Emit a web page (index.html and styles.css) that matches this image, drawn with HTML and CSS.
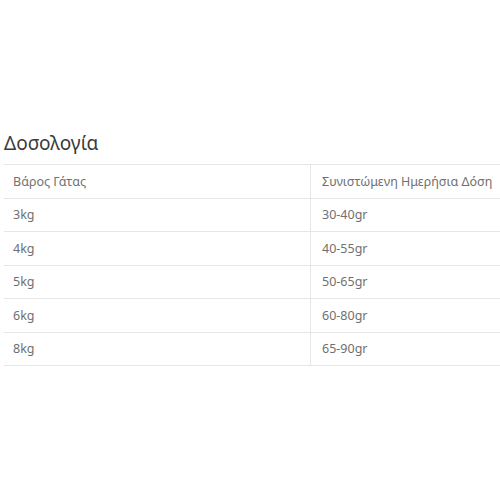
FILE: index.html
```html
<!DOCTYPE html>
<html lang="el">
<head>
<meta charset="utf-8">
<link rel="stylesheet" href="styles.css">
</head>
<body>
<section class="dosage">
  <h2 class="title">Δοσολογία</h2>
  <table class="table">
    <tr><td>Βάρος Γάτας</td><td>Συνιστώμενη Ημερήσια Δόση</td></tr>
    <tr><td>3kg</td><td>30-40gr</td></tr>
    <tr><td>4kg</td><td>40-55gr</td></tr>
    <tr><td>5kg</td><td>50-65gr</td></tr>
    <tr><td>6kg</td><td>60-80gr</td></tr>
    <tr><td>8kg</td><td>65-90gr</td></tr>
  </table>
</section>
</body>
</html>
```
FILE: styles.css
```css
html, body {
  margin: 0;
  padding: 0;
  background: #fff;
}
body {
  font-family: "Noto Sans", "Open Sans", sans-serif;
}
.dosage {
  padding: 130px 0 0 4px;
}
.title {
  margin: 0 0 8px 0;
  font-size: 19px;
  font-weight: 400;
  color: #3a3a3a;
  line-height: 26px;
}
.table {
  width: 496px;
  border-collapse: collapse;
}
.table td {
  border-top: 1px solid #e6e6e6;
  border-bottom: 1px solid #e6e6e6;
  height: 32.5px;
  padding: 0 0 0 9px;
  font-size: 12.5px;
  color: #707070;
  vertical-align: middle;
}
.table td:first-child {
  width: 297px;
  border-right: 1px solid #e6e6e6;
}
.table td + td {
  padding-left: 11px;
}
```
